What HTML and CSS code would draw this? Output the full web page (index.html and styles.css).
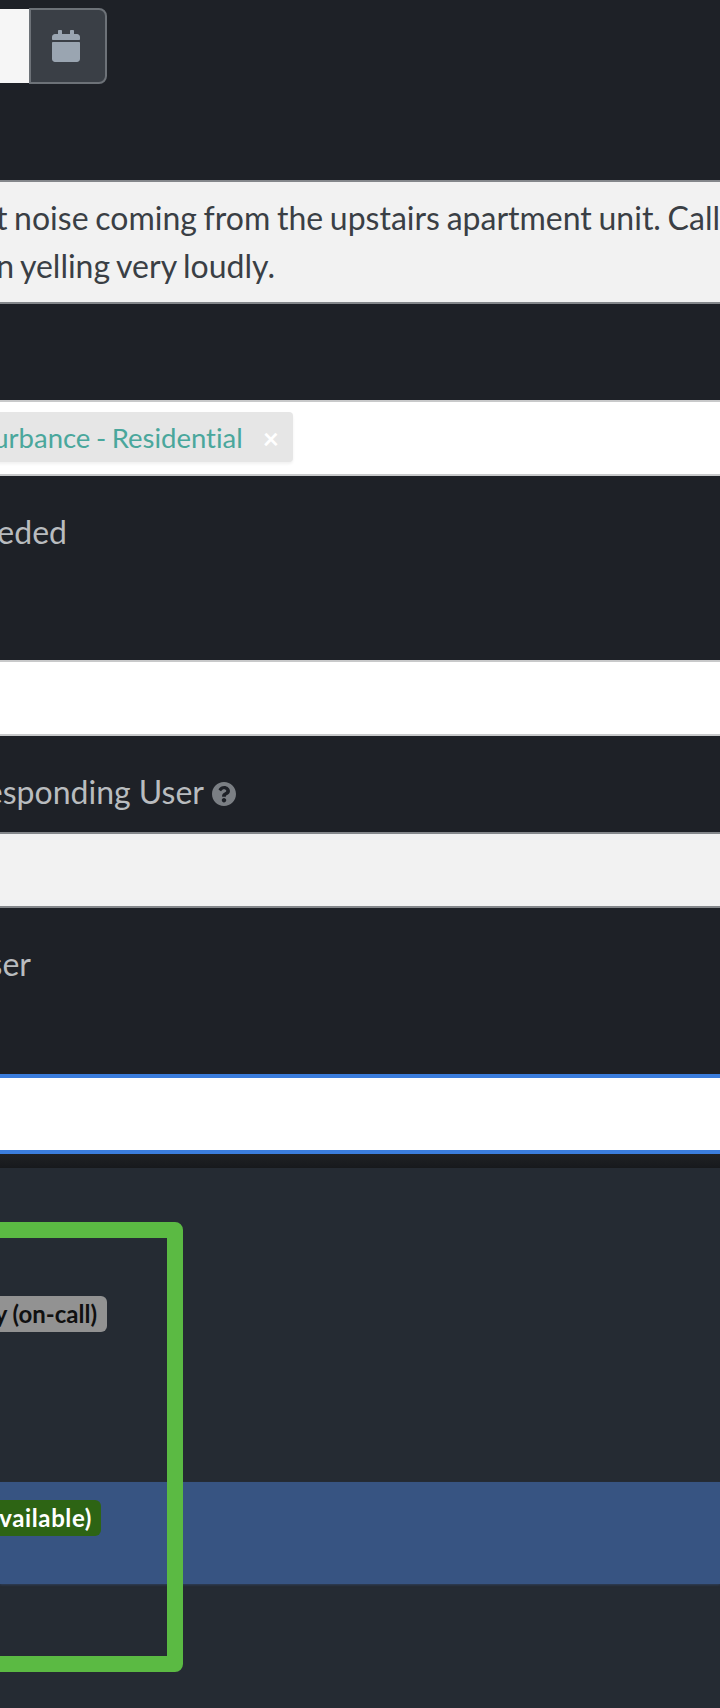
FILE: index.html
```html
<!DOCTYPE html>
<html lang="en">
<head>
<meta charset="utf-8">
<title>Incident form</title>
<link rel="stylesheet" href="styles.css">
</head>
<body>
<main class="form">
  <div class="date-group">
    <div class="date-input"></div>
    <button class="date-button" type="button" aria-label="Pick a date">
      <svg class="calendar-icon" viewBox="0 0 448 512" aria-hidden="true"><path d="M12 192h424c6.6 0 12 5.4 12 12v260c0 26.5-21.5 48-48 48H48c-26.5 0-48-21.5-48-48V204c0-6.6 5.4-12 12-12zm436-44v-36c0-26.5-21.5-48-48-48h-48V12c0-6.6-5.4-12-12-12h-40c-6.6 0-12 5.4-12 12v52H160V12c0-6.6-5.4-12-12-12h-40c-6.6 0-12 5.4-12 12v52H48C21.5 64 0 85.5 0 112v36c0 6.6 5.4 12 12 12h424c6.6 0 12-5.4 12-12z"/></svg>
    </button>
  </div>

  <div class="field field-description readonly">
    <p class="line">t noise coming from the upstairs apartment unit. Call</p>
    <p class="line line-short">n yelling very loudly.</p>
  </div>

  <div class="field field-tags">
    <div class="tag-anchor">
      <span class="tag"><span class="tag-text">urbance - Residential</span><span class="tag-close">×</span></span>
    </div>
  </div>

  <div class="label-block label-needed"><label class="label label-a">eded</label></div>
  <div class="field plain"></div>

  <div class="label-block label-responding">
    <label class="label label-b">esponding User</label>
    <svg class="help-icon" viewBox="8 8 496 496" aria-hidden="true"><path d="M504 256c0 136.997-111.043 248-248 248S8 392.997 8 256C8 119.083 119.043 8 256 8s248 111.083 248 248zM262.655 90c-54.497 0-89.255 22.957-116.549 63.758-3.536 5.286-2.353 12.415 2.715 16.258l34.699 26.31c5.205 3.947 12.621 3.008 16.665-2.122 17.864-22.658 30.113-35.797 57.303-35.797 20.429 0 45.698 13.148 45.698 32.958 0 14.976-12.363 22.667-32.534 33.976C247.128 238.528 216 254.941 216 296v4c0 6.627 5.373 12 12 12h56c6.627 0 12-5.373 12-12v-1.333c0-28.462 83.186-29.647 83.186-106.667 0-58.002-60.165-102-116.531-102zM256 338c-25.365 0-46 20.635-46 46 0 25.364 20.635 46 46 46s46-20.636 46-46c0-25.365-20.635-46-46-46z"/></svg>
  </div>
  <div class="field readonly short"></div>

  <div class="label-block label-user"><label class="label label-c">ser</label></div>
  <div class="field focused"></div>
</main>

<div class="shade"></div>

<section class="panel">
  <div class="row row-oncall">
    <div class="badge-anchor badge-anchor-gray"><span class="badge badge-gray">y (on-call)</span></div>
  </div>
  <div class="row row-selected">
    <div class="badge-anchor badge-anchor-green"><span class="badge badge-green">available)</span></div>
  </div>
  <div class="highlight-frame"></div>
</section>
</body>
</html>
```

FILE: styles.css
```css
html, body {
  margin: 0;
  padding: 0;
  width: 720px;
  height: 1708px;
  overflow: hidden;
  background: #252b33;
  font-family: "Lato", "Liberation Sans", sans-serif;
  font-variant-ligatures: none;
}

.form {
  background: #1e2127;
  padding-top: 8px;
  display: flex;
  flex-direction: column;
}

/* date picker */
.date-group {
  display: flex;
  height: 76px;
}
.date-input {
  width: 29px;
  margin: 1px 0;
  background: #f6f6f6;
}
.date-button {
  width: 78px;
  padding: 0;
  display: flex;
  align-items: center;
  justify-content: center;
  background: #3a3f46;
  border: 2px solid #6d7278;
  border-radius: 0 8px 8px 0;
}
.calendar-icon {
  width: 28px;
  height: 32px;
  margin-left: -4px;
  fill: #9aa5b1;
}

/* fields */
.field {
  box-sizing: border-box;
  width: 720px;
  height: 76px;
  border-top: 2px solid #c8c9ca;
  border-bottom: 2px solid #c8c9ca;
  background: #fff;
}
.readonly {
  background: #f2f2f2;
  border-color: #84878b;
}
.field-description {
  height: 124px;
  margin-top: 96px;
  padding: 12px 0 0;
  color: #3a3f45;
  font-size: 32px;
  line-height: 48px;
  word-spacing: -1.5px;
}
.line {
  margin: 0;
  display: flex;
  justify-content: flex-end;
  white-space: nowrap;
  width: 720px;
}
.line-short {
  width: 275px;
}

.field-tags {
  margin-top: 96px;
  padding-top: 10px;
}
.tag-anchor {
  width: 293px;
  display: flex;
  justify-content: flex-end;
}
.tag {
  flex: none;
  display: flex;
  align-items: center;
  height: 50px;
  padding: 1px 14px 0 24px;
  box-sizing: border-box;
  background: #e6e6e6;
  border-radius: 0 4px 4px 0;
  box-shadow: 0 2px 3px rgba(0, 0, 0, 0.06);
  font-size: 27.5px;
  word-spacing: -1.5px;
  white-space: nowrap;
}
.tag-text {
  color: #4aa79c;
}
.tag-close {
  margin-left: 20px;
  color: #fff;
  font-size: 28px;
  font-weight: 700;
}

/* labels */
.label-block {
  display: flex;
  align-items: flex-start;
  box-sizing: border-box;
  padding-top: 32px;
  white-space: nowrap;
  color: #b9bcbf;
  font-size: 32px;
  line-height: 48px;
}
.label {
  display: flex;
  justify-content: flex-end;
  flex: none;
}
.label-needed { height: 184px; }
.label-a { width: 67px; }
.label-responding { height: 96px; }
.label-b { width: 204px; }
.help-icon {
  flex: none;
  width: 24px;
  height: 24px;
  margin: 14px 0 0 8px;
  fill: #7b7f84;
}
.label-user { height: 166px; }
.label-c { width: 31px; }

.short { height: 76px; }
.focused {
  height: 80px;
  border-top: 4px solid #3b7ddd;
  border-bottom: 4px solid #3b7ddd;
}

.shade {
  height: 14px;
  background: linear-gradient(#1f2125, #17191c);
}

/* results panel */
.panel {
  position: relative;
  height: 540px;
  padding-top: 128px;
  box-sizing: border-box;
  background: #252b33;
}
.row {
  display: flex;
  align-items: flex-start;
}
.row-oncall {
  height: 186px;
}
.row-selected {
  height: 102px;
  padding-top: 18px;
  box-sizing: border-box;
  background: #375482;
  box-shadow: 0 1px 2px rgba(55, 84, 130, 0.5);
}
.badge-anchor {
  display: flex;
  justify-content: flex-end;
}
.badge-anchor-gray { width: 107px; }
.badge-anchor-green { width: 101px; }
.badge {
  flex: none;
  height: 36px;
  padding-right: 10px;
  border-radius: 0 6px 6px 0;
  font-size: 24px;
  font-weight: 700;
  line-height: 36px;
  white-space: nowrap;
}
.badge-gray {
  background: #929292;
  color: #101010;
}
.badge-green {
  padding-right: 9px;
  background: #2d6414;
  color: #fff;
  letter-spacing: 0.6px;
}

.highlight-frame {
  position: absolute;
  top: 54px;
  left: -20px;
  box-sizing: border-box;
  width: 203px;
  height: 450px;
  border: 16px solid #5bba43;
  border-radius: 8px;
}
```
